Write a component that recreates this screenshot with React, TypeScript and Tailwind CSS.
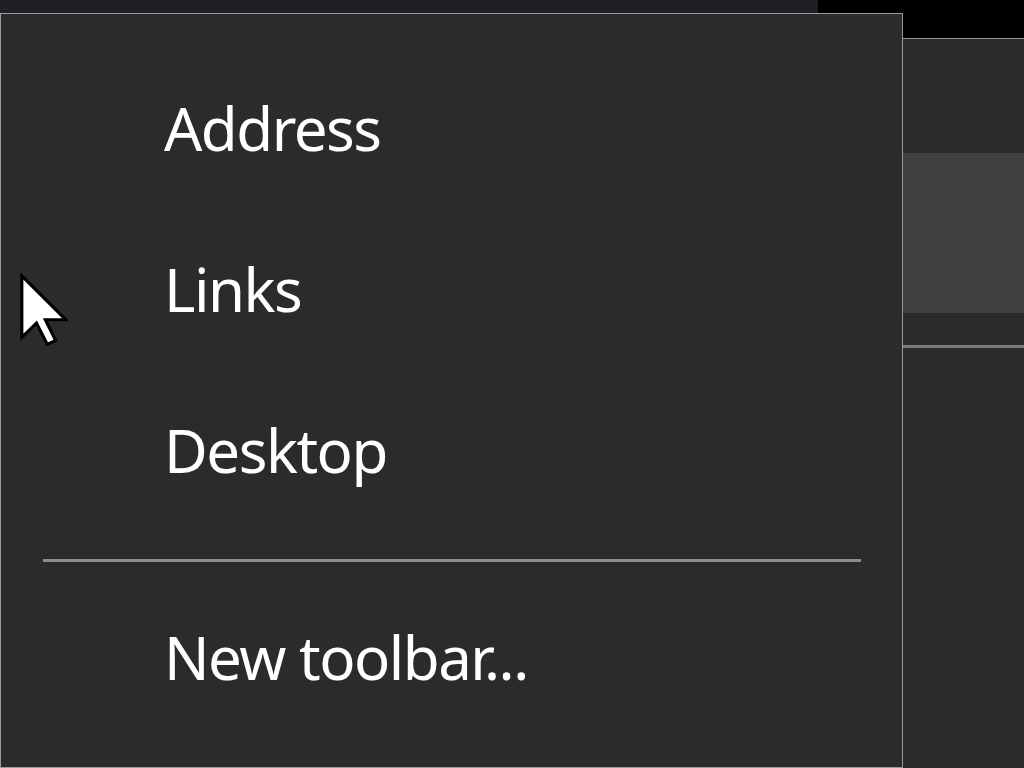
export default function App() {
  const items = ["Address", "Links", "Desktop"]
  return (
    <div className="relative w-[1024px] h-[768px] overflow-hidden bg-black flex" style={{ fontFamily: '"Noto Sans", "Open Sans", sans-serif' }}>
      {/* left column: taskbar strip + context menu */}
      <div className="flex flex-col w-[903px] shrink-0">
        <div className="flex h-[13px] shrink-0">
          <div className="w-[818px] bg-[#1f1f24]" />
          <div className="flex-1 bg-black" />
        </div>
        <div className="flex-1 bg-[#2b2b2b] border border-[#9a9a9a] flex flex-col pt-[33px]">
          {items.map((t) => (
            <div key={t} className="h-[161px] flex items-center pl-[163px] text-white text-[60px] tracking-[-1.5px]">
              {t}
            </div>
          ))}
          <div className="mt-[29px] ml-[42px] mr-[41px] h-[3px] bg-[#8c8c8c]" />
          <div className="mt-[14px] h-[161px] flex items-center pl-[163px] text-white text-[60px] tracking-[-1.5px]">
            New toolbar...
          </div>
        </div>
      </div>
      {/* right panel behind the menu */}
      <div className="flex-1 flex flex-col">
        <div className="h-[38px] bg-black shrink-0" />
        <div className="flex-1 bg-[#2b2b2b] border-t border-[#9a9a9a] flex flex-col">
          <div className="h-[114px]" />
          <div className="h-[160px] bg-[#404040]" />
          <div className="h-[32px]" />
          <div className="h-[3px] bg-[#7a7a7a]" />
          <div className="flex-1" />
        </div>
      </div>
      {/* mouse pointer */}
      <svg className="absolute left-[18px] top-[272px]" width="50" height="75" viewBox="0 0 13 19.5">
        <path d="M1 1 L1 17 L4.8 13.3 L7.6 18.8 L9.8 17.8 L7.1 12.4 L12.4 12.4 Z" fill="#fff" stroke="#000" strokeWidth="0.8" strokeLinejoin="miter" />
      </svg>
    </div>
  )
}
